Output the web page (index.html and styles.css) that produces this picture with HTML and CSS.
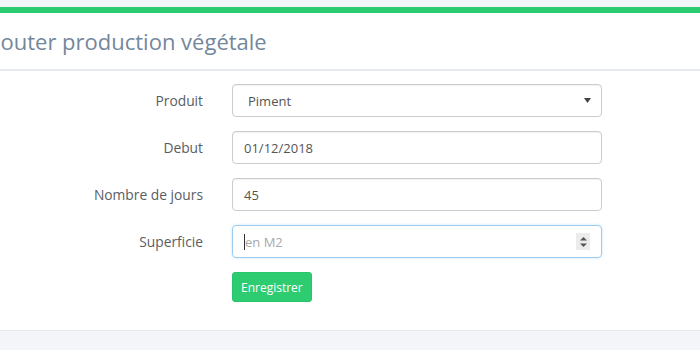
FILE: index.html
```html
<!DOCTYPE html>
<html lang="fr">
<head>
<meta charset="utf-8">
<title>Ajouter production végétale</title>
<link rel="stylesheet" href="styles.css">
</head>
<body>
<div class="panel">
  <div class="panel-title"><h2>Ajouter production végétale</h2></div>
  <form class="form">
    <div class="row">
      <label class="label">Produit</label>
      <div class="control select">
        <span>Piment</span>
        <svg class="caret" width="7" height="5" viewBox="0 0 7 5"><path d="M0 0H7L3.5 5Z" fill="#444"/></svg>
      </div>
    </div>
    <div class="row">
      <label class="label">Debut</label>
      <div class="control"><span>01/12/2018</span></div>
    </div>
    <div class="row">
      <label class="label">Nombre de jours</label>
      <div class="control"><span>45</span></div>
    </div>
    <div class="row">
      <label class="label">Superficie</label>
      <div class="control focus">
        <span class="ph"><i class="cursor"></i>en M2</span>
        <span class="spin">
          <svg width="9" height="14" viewBox="0 0 9 14"><path d="M1 5.5L4.5 2L8 5.5Z" fill="#555"/><path d="M1 8.5H8L4.5 12Z" fill="#555"/></svg>
        </span>
      </div>
    </div>
    <div class="row">
      <span class="label"></span>
      <div><button type="button" class="btn">Enregistrer</button></div>
    </div>
  </form>
</div>
</body>
</html>
```
FILE: styles.css
```css
* { box-sizing: border-box; }
html, body { margin: 0; padding: 0; }
body {
  background: #f3f5f8;
  font-family: "Open Sans", "Noto Sans", sans-serif;
  color: #5b5f63;
  width: 700px;
  height: 350px;
  overflow: hidden;
}
.panel {
  margin-top: 7px;
  margin-left: -30px;
  width: 740px;
  background: #fff;
  border-top: 6px solid #2ecc71;
  border-bottom: 1px solid #e6e9ed;
  padding: 0 10px;
}
.panel-title {
  height: 58px;
  border-bottom: 2px solid #e6e9ed;
  display: flex;
  align-items: center;
}
.panel-title h2 {
  margin: 0;
  font-size: 22px;
  font-weight: 400;
  color: #73879c;
  position: relative;
  top: 0;
  left: 1px;
}
.form {
  padding: 13px 0 28px;
  display: flex;
  flex-direction: column;
  gap: 14px;
}
.row {
  display: grid;
  grid-template-columns: 223px 370px;
  column-gap: 29px;
  align-items: center;
}
.label {
  text-align: right;
  font-size: 13.8px;
  color: #595d62;
}
.control {
  height: 33px;
  border: 1px solid #ccc;
  border-radius: 4px;
  padding: 0 11px;
  display: flex;
  align-items: center;
  justify-content: space-between;
  font-size: 13px;
  color: #555;
  box-shadow: inset 0 1px 1px rgba(0,0,0,0.06);
}
.select span { padding-left: 4px; }
.caret { margin-right: -1px; }
.focus {
  border-color: #9ccbed;
  box-shadow: 0 0 3px rgba(102,175,233,0.35);
}
.ph {
  color: #a9a9a9;
  display: flex;
  align-items: center;
}
.cursor {
  display: inline-block;
  width: 1px;
  height: 16px;
  background: #333;
}
.spin {
  width: 14px;
  height: 17px;
  background: #ececec;
  display: flex;
  align-items: center;
  justify-content: center;
}
.btn {
  background: #2ecc71;
  color: #fff;
  border: 1px solid #29c46b;
  border-radius: 3px;
  height: 30px;
  padding: 0 8px;
  font-family: "Open Sans", "Noto Sans", sans-serif;
  font-size: 12px;
}
```
